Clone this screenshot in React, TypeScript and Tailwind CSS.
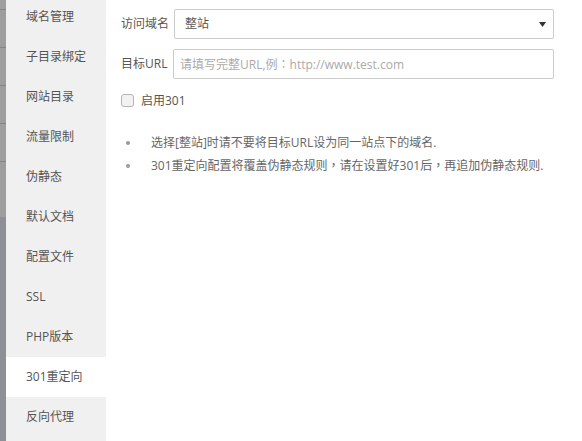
import React from "react";

const items = [
  "域名管理",
  "子目录绑定",
  "网站目录",
  "流量限制",
  "伪静态",
  "默认文档",
  "配置文件",
  "SSL",
  "PHP版本",
  "301重定向",
  "反向代理",
];

function P({ c }: { c: string }) {
  return <span style={{ fontFamily: '"Noto Sans CJK TC", sans-serif' }}>{c}</span>;
}

export default function App() {
  const font = { fontFamily: '"Open Sans", "Noto Sans CJK SC", sans-serif' };
  return (
    <div
      className="w-[582px] h-[441px] flex overflow-hidden bg-white text-[12px] text-[#555]"
      style={font}
    >
      {/* left strip */}
      <div className="w-[6px] flex flex-col shrink-0">
        <div className="h-[9px] bg-[#9e9e9e]" />
        <div className="h-[38px] bg-[#9e9e9e] border-t border-[#858585]" />
        <div className="h-[38px] bg-[#9e9e9e] border-t border-[#858585]" />
        <div className="h-[38px] bg-[#9e9e9e] border-t border-[#858585]" />
        <div className="h-[38px] bg-[#9e9e9e] border-t border-[#858585]" />
        <div className="h-[56px] bg-[#9e9e9e] border-t border-[#858585]" />
        <div className="flex-1 bg-[#8f9095]" />
      </div>
      {/* sidebar */}
      <div className="w-[100px] shrink-0 bg-[#f0f0f0] flex flex-col">
        <div className="mt-[-3px] flex flex-col">
          {items.map((t) => (
            <div
              key={t}
              className={
                "h-[40px] flex items-center pl-[20px] " +
                (t === "301重定向" ? "bg-white" : "")
              }
            >
              {t}
            </div>
          ))}
        </div>
      </div>
      {/* main */}
      <div className="flex-1 pl-[15px] pt-[9px] flex flex-col">
        <div className="flex items-center h-[30px]">
          <span className="w-[53px]">访问域名</span>
          <div className="w-[380px] h-[30px] border border-[#cccccc] rounded-[2px] flex items-center justify-between pl-[10px] pr-[7px] text-[#555]">
            <span>整站</span>
            <svg width="7" height="5" viewBox="0 0 7 5">
              <path d="M0 0 L7 0 L3.5 5 Z" fill="#333" />
            </svg>
          </div>
        </div>
        <div className="flex items-center h-[30px] mt-[10px]">
          <span className="w-[52px]">目标URL</span>
          <div className="w-[381px] h-[30px] border border-[#cccccc] rounded-[2px] flex items-center pl-[6px] text-[#aaaaaa]">
            <span>
              请填写完整URL,例<P c="：" />http://www.test.com
            </span>
          </div>
        </div>
        <div className="flex items-center mt-[15px] h-[13px]">
          <div className="w-[13px] h-[13px] border border-[#b5b5b5] rounded-[3px] bg-[#f2f2f2]" />
          <span className="ml-[7px]">启用301</span>
        </div>
        <div className="mt-[24px] flex flex-col text-[#666]">
          <div className="flex items-center h-[23px]">
            <span className="ml-[5px] w-[4px] h-[4px] rounded-full bg-[#999]" />
            <span className="ml-[21px]">选择[整站]时请不要将目标URL设为同一站点下的域名.</span>
          </div>
          <div className="flex items-center h-[23px]">
            <span className="ml-[5px] w-[4px] h-[4px] rounded-full bg-[#999]" />
            <span className="ml-[21px]">
              301重定向配置将覆盖伪静态规则<P c="，" />请在设置好301后<P c="，" />再追加伪静态规则.
            </span>
          </div>
        </div>
      </div>
    </div>
  );
}
